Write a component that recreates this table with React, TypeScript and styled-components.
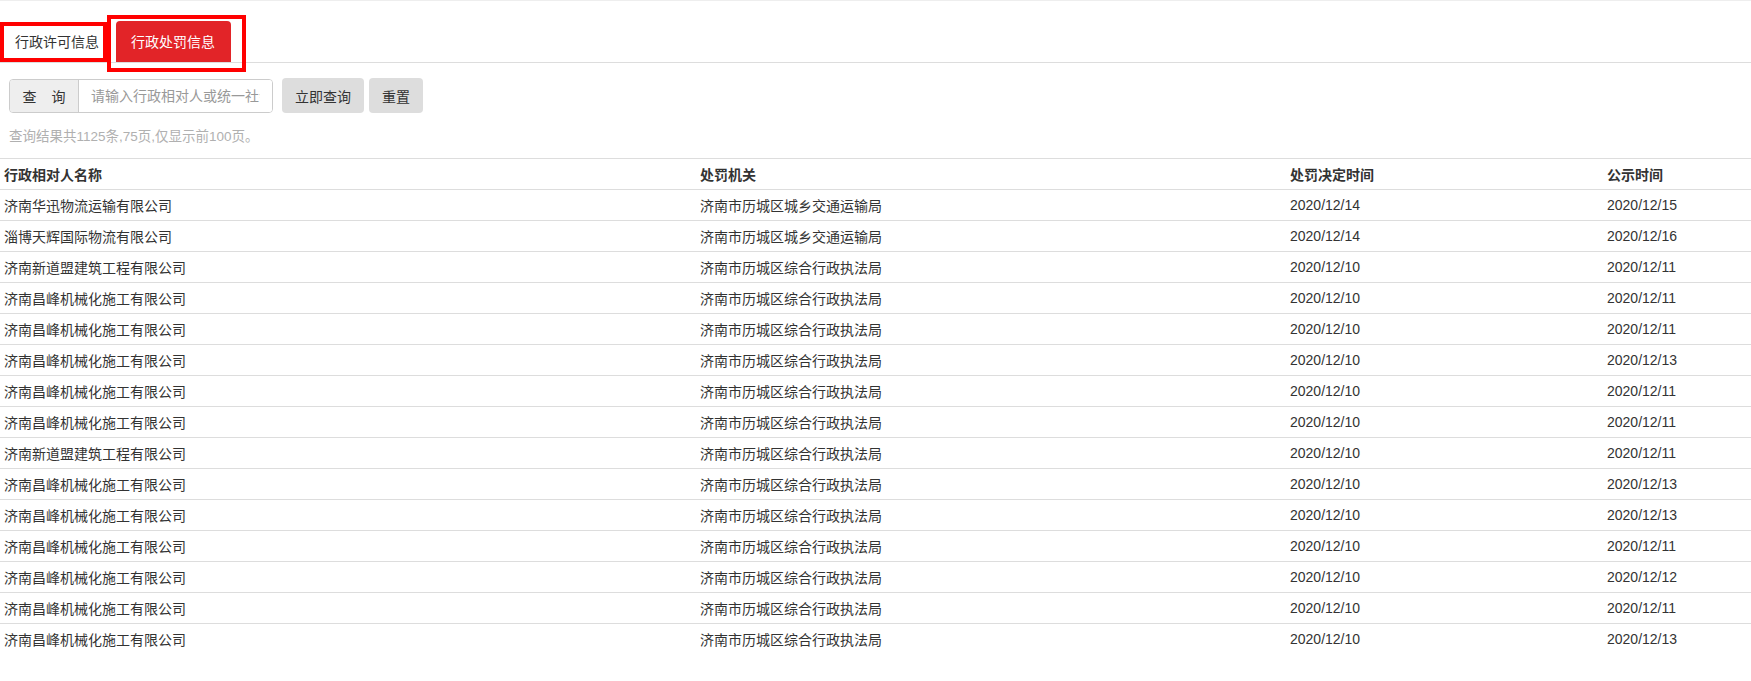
import React from "react";
import styled, { createGlobalStyle } from "styled-components";

const GlobalStyle = createGlobalStyle`
  html, body {
    margin: 0;
    padding: 0;
    background: #fff;
  }
  body {
    font-family: "Liberation Sans", "Noto Sans CJK SC", sans-serif;
    font-size: 14px;
    color: #333;
  }
  * { box-sizing: border-box; }
`;

const Page = styled.div`
  border-top: 1px solid #eee;
  width: 1751px;
`;

const TabBar = styled.div`
  display: flex;
  align-items: flex-end;
  height: 62px;
  border-bottom: 1px solid #ddd;
`;

const Tab = styled.div<{ $active?: boolean; $offset?: number }>`
  position: relative;
  height: 41px;
  line-height: 42px;
  padding: 0 16px 0 15px;
  margin-left: ${(p) => p.$offset ?? 0}px;
  font-size: 14px;
  border-radius: 4px 4px 0 0;
  color: ${(p) => (p.$active ? "#fff" : "#333")};
  background: ${(p) => (p.$active ? "#e22428" : "#fff")};
  white-space: nowrap;
`;

const Marker = styled.span<{ $top: number; $left: number; $w: number; $h: number }>`
  position: absolute;
  top: ${(p) => p.$top}px;
  left: ${(p) => p.$left}px;
  width: ${(p) => p.$w}px;
  height: ${(p) => p.$h}px;
  border: 4px solid #ff0000;
  pointer-events: none;
`;

const SearchRow = styled.div`
  display: flex;
  align-items: center;
  margin-top: 15px;
  padding-left: 9px;
  height: 35px;
`;

const InputGroup = styled.div`
  display: flex;
  width: 264px;
  height: 34px;
  border: 1px solid #ccc;
  border-radius: 4px;
  overflow: hidden;
`;

const GroupLabel = styled.div`
  display: flex;
  align-items: center;
  justify-content: center;
  gap: 15px;
  width: 69px;
  flex: none;
  background: #eee;
  border-right: 1px solid #ccc;
  color: #333;
  font-size: 14px;
`;

const SearchInput = styled.input`
  flex: 1;
  min-width: 0;
  border: none;
  outline: none;
  padding: 0 12px;
  font-family: inherit;
  font-size: 14px;
  color: #333;
  &::placeholder {
    color: #999;
  }
`;

const Button = styled.button<{ $gap: number }>`
  height: 35px;
  margin-left: ${(p) => p.$gap}px;
  padding: 0 13px;
  border: none;
  border-radius: 4px;
  background: #ddd;
  color: #333;
  font-family: inherit;
  font-size: 14px;
  cursor: pointer;
`;

const ResultInfo = styled.div`
  margin-top: 14px;
  padding-left: 9px;
  height: 20px;
  line-height: 20px;
  font-size: 13.5px;
  color: #b0b0b0;
`;

const Table = styled.table`
  margin-top: 11px;
  width: 100%;
  border-collapse: collapse;
  table-layout: fixed;
`;

const Row = styled.tr`
  border-top: 1px solid #ddd;
`;

const HeadCell = styled.th`
  height: 31px;
  padding: 0 4px;
  text-align: left;
  font-weight: bold;
  font-size: 14px;
  color: #333;
  white-space: nowrap;
`;

const Cell = styled.td`
  height: 31px;
  padding: 0 4px;
  font-size: 14px;
  color: #333;
  white-space: nowrap;
`;

const A = "济南昌峰机械化施工有限公司";
const B = "济南新道盟建筑工程有限公司";
const ZH = "济南市历城区综合行政执法局";
const JT = "济南市历城区城乡交通运输局";

const rows: [string, string, string, string][] = [
  ["济南华迅物流运输有限公司", JT, "2020/12/14", "2020/12/15"],
  ["淄博天辉国际物流有限公司", JT, "2020/12/14", "2020/12/16"],
  [B, ZH, "2020/12/10", "2020/12/11"],
  [A, ZH, "2020/12/10", "2020/12/11"],
  [A, ZH, "2020/12/10", "2020/12/11"],
  [A, ZH, "2020/12/10", "2020/12/13"],
  [A, ZH, "2020/12/10", "2020/12/11"],
  [A, ZH, "2020/12/10", "2020/12/11"],
  [B, ZH, "2020/12/10", "2020/12/11"],
  [A, ZH, "2020/12/10", "2020/12/13"],
  [A, ZH, "2020/12/10", "2020/12/13"],
  [A, ZH, "2020/12/10", "2020/12/11"],
  [A, ZH, "2020/12/10", "2020/12/12"],
  [A, ZH, "2020/12/10", "2020/12/11"],
  [A, ZH, "2020/12/10", "2020/12/13"],
];

export default function App() {
  return (
    <Page>
      <GlobalStyle />
      <TabBar>
        <Tab>
          行政许可信息
          <Marker $top={1} $left={0} $w={107} $h={40} />
        </Tab>
        <Tab $active $offset={1}>
          行政处罚信息
          <Marker $top={-6} $left={-9} $w={139} $h={57} />
        </Tab>
      </TabBar>
      <SearchRow>
        <InputGroup>
          <GroupLabel>
            <span>查</span>
            <span>询</span>
          </GroupLabel>
          <SearchInput placeholder="请输入行政相对人或统一社会信用代码" />
        </InputGroup>
        <Button $gap={9}>立即查询</Button>
        <Button $gap={5}>重置</Button>
      </SearchRow>
      <ResultInfo>查询结果共1125条,75页,仅显示前100页。</ResultInfo>
      <Table>
        <colgroup>
          <col style={{ width: 696 }} />
          <col style={{ width: 590 }} />
          <col style={{ width: 317 }} />
          <col />
        </colgroup>
        <thead>
          <Row>
            <HeadCell>行政相对人名称</HeadCell>
            <HeadCell>处罚机关</HeadCell>
            <HeadCell>处罚决定时间</HeadCell>
            <HeadCell>公示时间</HeadCell>
          </Row>
        </thead>
        <tbody>
          {rows.map((r, i) => (
            <Row key={i}>
              {r.map((c, j) => (
                <Cell key={j}>{c}</Cell>
              ))}
            </Row>
          ))}
        </tbody>
      </Table>
    </Page>
  );
}
